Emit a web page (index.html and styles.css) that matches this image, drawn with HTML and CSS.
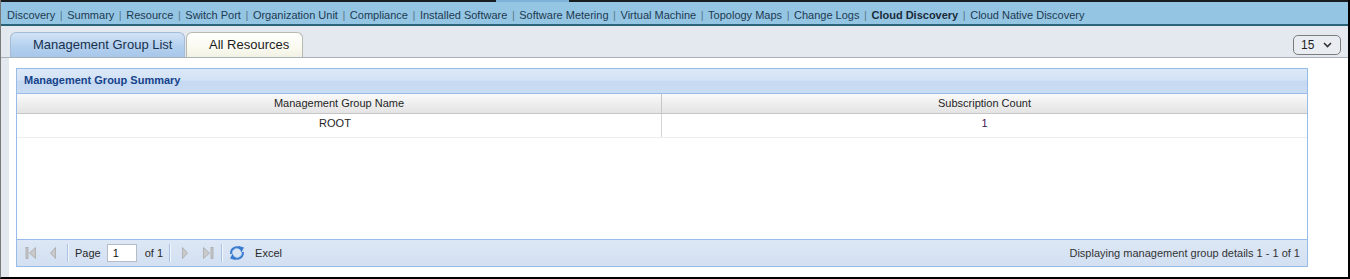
FILE: index.html
```html
<!DOCTYPE html>
<html>
<head>
<meta charset="utf-8">
<title>Cloud Discovery</title>
<link rel="stylesheet" href="styles.css">
</head>
<body>
<div class="frame">
  <div class="topline"><span class="tl-dark tl-left"></span><span class="tl-light"></span><span class="tl-dark tl-right"></span></div>
  <nav class="nav">
    <a class="nav-item">Discovery</a><span class="sep">|</span><a class="nav-item">Summary</a><span class="sep">|</span><a class="nav-item">Resource</a><span class="sep">|</span><a class="nav-item">Switch Port</a><span class="sep">|</span><a class="nav-item">Organization Unit</a><span class="sep">|</span><a class="nav-item">Compliance</a><span class="sep">|</span><a class="nav-item">Installed Software</a><span class="sep">|</span><a class="nav-item">Software Metering</a><span class="sep">|</span><a class="nav-item">Virtual Machine</a><span class="sep">|</span><a class="nav-item">Topology Maps</a><span class="sep">|</span><a class="nav-item">Change Logs</a><span class="sep">|</span><a class="nav-item nav-current">Cloud Discovery</a><span class="sep">|</span><a class="nav-item">Cloud Native Discovery</a>
  </nav>
  <div class="tabbar">
    <div class="tabs">
      <div class="tab tab-active">Management Group List</div>
      <div class="tab tab-plain">All Resources</div>
    </div>
    <div class="select">
      <span class="select-value">15</span>
      <svg class="select-arrow" width="9" height="6" viewBox="0 0 9 6"><polyline points="1,1 4.5,4.5 8,1" fill="none" stroke="#333" stroke-width="1.6"/></svg>
    </div>
  </div>
  <div class="content">
    <div class="panel">
      <div class="panel-title">Management Group Summary</div>
      <div class="grid-head">
        <div class="hcell hcell-first">Management Group Name</div>
        <div class="hcell">Subscription Count</div>
      </div>
      <div class="grid-row">
        <div class="cell cell-first">ROOT</div>
        <div class="cell cell-num">1</div>
      </div>
      <div class="grid-empty"></div>
      <div class="pager">
        <div class="pager-left">
          <svg class="pg-icon pg-first" width="12" height="16" viewBox="0 0 12 16"><rect x="1" y="2.5" width="2" height="11" fill="#c9c9c9" stroke="#a9a9a9" stroke-width="0.8"/><polygon points="10.5,2.5 4.5,8 10.5,13.5" fill="#c9c9c9" stroke="#a9a9a9" stroke-width="0.8"/></svg>
          <svg class="pg-icon pg-prev" width="8" height="16" viewBox="0 0 8 16"><polygon points="6.5,2.5 1.5,8 6.5,13.5" fill="#c9c9c9" stroke="#a9a9a9" stroke-width="0.8"/></svg>
          <span class="pg-sep pg-sep1"></span>
          <span class="pg-text">Page</span>
          <span class="pg-input">1</span>
          <span class="pg-text pg-of">of 1</span>
          <span class="pg-sep pg-sep2"></span>
          <svg class="pg-icon pg-next" width="8" height="16" viewBox="0 0 8 16"><polygon points="1.5,2.5 6.5,8 1.5,13.5" fill="#c9c9c9" stroke="#a9a9a9" stroke-width="0.8"/></svg>
          <svg class="pg-icon pg-last" width="12" height="16" viewBox="0 0 12 16"><polygon points="1.5,2.5 7.5,8 1.5,13.5" fill="#c9c9c9" stroke="#a9a9a9" stroke-width="0.8"/><rect x="9" y="2.5" width="2" height="11" fill="#c9c9c9" stroke="#a9a9a9" stroke-width="0.8"/></svg>
          <span class="pg-sep pg-sep3"></span>
          <svg class="pg-icon pg-refresh" width="16" height="16" viewBox="0 0 16 16">
            <path d="M2.3 9 A5.6 5.6 0 0 1 11.2 3.6" fill="none" stroke="#3a7bd0" stroke-width="2.2"/>
            <polygon points="9.2,0.8 15,2.4 12.4,7.4" fill="#3a7bd0"/>
            <path d="M13.7 7 A5.6 5.6 0 0 1 4.8 12.4" fill="none" stroke="#3a7bd0" stroke-width="2.2"/>
            <polygon points="6.8,15.2 1,13.6 3.6,8.6" fill="#3a7bd0"/>
            <path d="M3.2 8.2 A4.6 4.6 0 0 1 9.5 3.8" fill="none" stroke="#a8ccf2" stroke-width="0.8"/>
            <path d="M12.8 7.8 A4.6 4.6 0 0 1 6.5 12.2" fill="none" stroke="#a8ccf2" stroke-width="0.8"/>
          </svg>
          <span class="pg-text pg-excel">Excel</span>
        </div>
        <div class="pager-info">Displaying management group details 1 - 1 of 1</div>
      </div>
    </div>
  </div>
</div>
</body>
</html>
```

FILE: styles.css
```css
* { box-sizing: border-box; }
html, body { margin: 0; padding: 0; }
body {
  font-family: "Liberation Sans", Arial, sans-serif;
  font-size: 11px;
  color: #222;
  background: #fff;
}
.frame {
  width: 1350px;
  height: 279px;
  display: flex;
  flex-direction: column;
  border-left: 1px solid #7a7a7a;
  border-right: 2px solid #000;
  border-bottom: 2px solid #000;
  background: #e4e9ef;
  overflow: hidden;
}
.topline {
  display: flex;
  height: 2px;
  flex: none;
}
.tl-dark { background: #1a1d20; }
.tl-left { width: 495px; }
.tl-light { width: 73px; background: #7fb2d8; }
.tl-right { flex: 1; }
.nav {
  flex: none;
  height: 24px;
  padding: 4px 0 0 6px;
  line-height: 18px;
  background: #94c5e3;
  border-bottom: 2px solid #2a6478;
  white-space: nowrap;
}
.nav-item {
  color: #1d3a52;
  text-decoration: none;
}
.nav-current {
  font-weight: bold;
  color: #1b2b3a;
}
.sep {
  color: #5a7a90;
  padding: 0 4.55px;
}
.tabbar {
  flex: none;
  height: 32px;
  display: flex;
  justify-content: space-between;
  align-items: flex-start;
  padding: 6px 7px 0 9px;
  border-bottom: 1px solid #a9b1b9;
}
.tabs {
  display: flex;
  gap: 1px;
}
.tab {
  height: 25px;
  line-height: 24px;
  font-size: 13px;
  border: 1px solid #a9b8c8;
  border-bottom: none;
  border-radius: 6px 6px 0 0;
  white-space: nowrap;
}
.tab-active {
  width: 175px;
  padding-left: 22px;
  color: #17324e;
  background: linear-gradient(#d2e3f5, #b4d0ee 55%, #a7c7ea);
  border-color: #a4bcd6;
}
.tab-plain {
  width: 117px;
  padding-left: 22px;
  color: #1c1c1c;
  background: linear-gradient(#ffffff, #fafaf0 60%, #f1f1e4);
  border-color: #b9b9b0;
}
.select {
  margin-top: 3px;
  width: 48px;
  height: 20px;
  border: 1px solid #7c7c7c;
  border-radius: 5px;
  display: flex;
  align-items: center;
  justify-content: space-between;
  padding: 0 8px 0 7px;
  font-size: 12px;
  color: #1e1e1e;
  background: #e9edf2;
}
.select-arrow { display: block; }
.content {
  flex: 1;
  margin-left: 8px;
  background: #fff;
  padding: 10px 40px 10px 7px;
  display: flex;
  flex-direction: column;
}
.panel {
  flex: 1;
  border: 1px solid #99bbe8;
  display: flex;
  flex-direction: column;
}
.panel-title {
  flex: none;
  height: 25px;
  line-height: 23px;
  padding-left: 7px;
  font-weight: bold;
  color: #15428b;
  background: linear-gradient(#dce8f7, #d3e3f5 45%, #c5d9f2 52%, #cadcf3);
  border-bottom: 1px solid #99bbe8;
}
.grid-head {
  flex: none;
  display: grid;
  grid-template-columns: 645px 1fr;
  height: 20px;
  background: linear-gradient(#fafafa, #ececec 60%, #e4e4e4);
  border-bottom: 1px solid #c6c6c6;
}
.hcell {
  line-height: 19px;
  text-align: center;
  color: #1f1f1f;
}
.hcell-first { border-right: 1px solid #c6c6c6; }
.grid-row {
  flex: none;
  display: grid;
  grid-template-columns: 645px 1fr;
  height: 24px;
  border-bottom: 1px solid #ededed;
}
.cell {
  line-height: 18px;
  padding-bottom: 4px;
  text-align: center;
  color: #1f1f1f;
}
.cell-first {
  border-right: 1px solid #d4d4d4;
  padding-right: 8px;
}
.cell-num { color: #3c1456; }
.grid-empty { flex: 1; }
.pager {
  flex: none;
  height: 27px;
  display: flex;
  align-items: center;
  justify-content: space-between;
  background: linear-gradient(#dde7f5, #d2e0f2);
  border-top: 1px solid #99bbe8;
  padding: 0 7px 0 8px;
  color: #2a2a2a;
}
.pager-left {
  display: flex;
  align-items: center;
}
.pg-icon { display: block; flex: none; }
.pg-prev { margin-left: 12px; }
.pg-sep {
  flex: none;
  width: 2px;
  height: 18px;
  margin-right: 6px;
  border-left: 1px solid #a9c1e2;
  border-right: 1px solid #f2f6fb;
}
.pg-sep1 { margin-left: 10px; }
.pg-sep2 { margin-left: 6px; }
.pg-sep3 { margin-left: 7px; }
.pg-text { line-height: 14px; }
.pg-input {
  margin-left: 6px;
  width: 30px;
  height: 18px;
  line-height: 16px;
  padding-left: 5px;
  background: #fff;
  border: 1px solid #b5bcc6;
  color: #111;
}
.pg-of { margin-left: 8px; }
.pg-next { margin-left: 4px; }
.pg-last { margin-left: 13px; }
.pg-excel { margin-left: 10px; }
.pager-info {
  color: #333;
}
```
